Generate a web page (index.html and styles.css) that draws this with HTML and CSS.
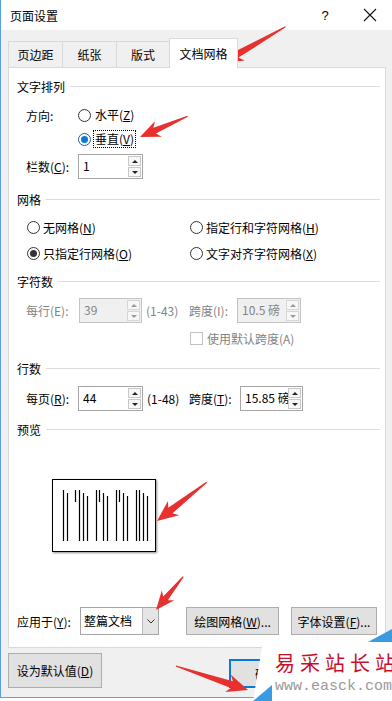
FILE: index.html
```html
<!DOCTYPE html>
<html lang="zh-CN">
<head>
<meta charset="utf-8">
<title>页面设置</title>
<link rel="stylesheet" href="styles.css">
</head>
<body>
<div class="win">
  <div class="titlebar">
    <span class="title">页面设置</span>
    <span class="help">?</span>
    <span class="close"><svg width="14" height="14" viewBox="0 0 14 14"><path d="M1 1 L13 13 M13 1 L1 13" stroke="#111" stroke-width="1.1" fill="none"/></svg></span>
  </div>
  <div class="client">
    <div class="tabs">
      <div class="tab t1">页边距</div>
      <div class="tab t2">纸张</div>
      <div class="tab t3">版式</div>
      <div class="tab t4 active">文档网格</div>
    </div>
    <div class="panel">
      <div class="group mt9">文字排列</div>
      <div class="row h24 mt8 ind9">
        <span class="lbl w52">方向:</span>
        <span class="radio"></span>
        <span class="rlab">水平(<u>Z</u>)</span>
      </div>
      <div class="row h24 ind9">
        <span class="lbl w52"></span>
        <span class="radio on focus"></span>
        <span class="rlab ring">垂直(<u>V</u>)</span>
      </div>
      <div class="row h25 mt3 ind9">
        <span class="lbl w52">栏数(<u>C</u>):</span>
        <div class="spin sw65"><span class="val">1</span><span class="arrows"><span class="up"></span><span class="dn"></span></span></div>
      </div>

      <div class="group mt11">网格</div>
      <div class="grid mt6">
        <div class="opt"><span class="radio"></span><span>无网格(<u>N</u>)</span></div>
        <div class="opt"><span class="radio"></span><span>指定行和字符网格(<u>H</u>)</span></div>
        <div class="opt"><span class="radio on"></span><span>只指定行网格(<u>O</u>)</span></div>
        <div class="opt"><span class="radio"></span><span>文字对齐字符网格(<u>X</u>)</span></div>
      </div>

      <div class="group mt6">字符数</div>
      <div class="row h25 mt8 ind9 dis">
        <span class="lbl w53">每行(E):</span>
        <div class="spin sw63 disabled"><span class="val">39</span><span class="arrows"><span class="up"></span><span class="dn"></span></span></div>
        <span class="range w43">(1-43)</span>
        <span class="lbl w48">跨度(I):</span>
        <div class="spin sw64 disabled"><span class="val">10.5 磅</span><span class="arrows"><span class="up"></span><span class="dn"></span></span></div>
      </div>
      <div class="row h20 mt5 chkrow dis">
        <span class="check"></span><span>使用默认跨度(A)</span>
      </div>

      <div class="group mt11">行数</div>
      <div class="row h25 mt9 ind9">
        <span class="lbl w52">每页(<u>R</u>):</span>
        <div class="spin sw65"><span class="val">44</span><span class="arrows"><span class="up"></span><span class="dn"></span></span></div>
        <span class="range w42">(1-48)</span>
        <span class="lbl w51">跨度(<u>T</u>):</span>
        <div class="spin sw63"><span class="val">15.85 磅</span><span class="arrows"><span class="up"></span><span class="dn"></span></span></div>
      </div>

      <div class="group mt9">预览</div>
      <div class="preview">
        <svg width="102" height="71" viewBox="0 0 102 71">
          <g stroke="#000" stroke-width="1.2">
            <line x1="10.5" y1="10" x2="10.5" y2="61"/>
            <line x1="14.5" y1="13" x2="14.5" y2="61"/>
            <line x1="22.5" y1="10" x2="22.5" y2="22"/>
            <line x1="26.5" y1="10" x2="26.5" y2="61"/>
            <line x1="30.5" y1="13" x2="30.5" y2="61"/>
            <line x1="34.5" y1="16" x2="34.5" y2="61"/>
            <line x1="43.5" y1="10" x2="43.5" y2="61"/>
            <line x1="46.5" y1="10" x2="46.5" y2="22"/>
            <line x1="50.5" y1="13" x2="50.5" y2="61"/>
            <line x1="54.5" y1="16" x2="54.5" y2="61"/>
            <line x1="63.5" y1="10" x2="63.5" y2="61"/>
            <line x1="66.5" y1="10" x2="66.5" y2="22"/>
            <line x1="70.5" y1="13" x2="70.5" y2="61"/>
            <line x1="74.5" y1="16" x2="74.5" y2="61"/>
            <line x1="83.5" y1="10" x2="83.5" y2="61"/>
            <line x1="86.5" y1="10" x2="86.5" y2="61"/>
            <line x1="90.5" y1="13" x2="90.5" y2="61"/>
            <line x1="94.5" y1="16" x2="94.5" y2="61"/>
          </g>
        </svg>
      </div>

      <div class="row h28 mt55">
        <span class="lbl w63">应用于(<u>Y</u>):</span>
        <div class="select"><span class="sval">整篇文档</span><span class="sbtn"><svg width="8" height="5" viewBox="0 0 8 5"><path d="M0.5 0.5 L4 4 L7.5 0.5" stroke="#333" stroke-width="1" fill="none"/></svg></span></div>
        <button class="btn b1">绘图网格(<u>W</u>)...</button>
        <button class="btn b2">字体设置(<u>F</u>)...</button>
      </div>
    </div>
    <div class="bottom">
      <button class="btn bdef">设为默认值(<u>D</u>)</button>
      <button class="btn bok">确定</button>
    </div>
  </div>
</div>

<svg class="arrows-overlay" width="392" height="701" viewBox="0 0 392 701">
  <g fill="#e8302e">
    <polygon transform="translate(222,63) rotate(-29.7)" points="0,0 21,-9 17,-3.5 73,-0.6 73,0.6 17,3.5 21,9"/>
    <polygon transform="translate(140,137) rotate(-23.6)" points="0,0 20,-8.5 16,-3.2 52,-0.6 52,0.6 16,3.2 20,8.5"/>
    <polygon transform="translate(157,521) rotate(-38)" points="0,0 21,-9 17,-3.5 63,-0.6 63,0.6 17,3.5 21,9"/>
    <polygon transform="translate(156,610) rotate(-50.7)" points="0,0 19,-8 15,-3 43,-0.6 43,0.6 15,3 19,8"/>
    <polygon transform="translate(248,690) rotate(-161.6)" points="0,0 21,-9 17,-3.5 76,-0.6 76,0.6 17,3.5 21,9"/>
  </g>
</svg>

<div class="wm">
  <svg class="wm-bg" width="142" height="75" viewBox="0 0 142 75">
    <polygon points="13,16 142,16 142,75 3,75" fill="#fff"/>
    <polygon points="118,16 142,3 142,16" fill="#3a9be0"/>
    <polygon points="3,75 22,59 22,75" fill="#3a9be0"/>
  </svg>
  <div class="wm-t1">易采站长站</div>
  <div class="wm-t2">www.easck.com</div>
</div>
</body>
</html>
```

FILE: styles.css
```css
* { box-sizing: border-box; }
html, body { margin: 0; padding: 0; }
body {
  width: 392px;
  height: 701px;
  overflow: hidden;
  position: relative;
  background: #fff;
  font-family: "Noto Sans CJK SC", "Noto Sans", sans-serif;
  font-size: 12px;
  color: #000;
}
u { text-decoration: underline; text-underline-offset: 1px; }

.win {
  height: 698px;
  border-left: 1px solid #5b9fe3;
  border-bottom: 1px solid #5b9fe3;
  background: #f0f0f0;
  display: flex;
  flex-direction: column;
}
.titlebar {
  height: 30px;
  flex: none;
  background: #fff;
  display: flex;
  align-items: center;
  padding-left: 9px;
}
.title { flex: 1; font-size: 12px; }
.help {
  width: 14px;
  text-align: center;
  margin-right: 31px;
  font-family: "Liberation Sans", sans-serif;
  font-size: 13px;
}
.close { width: 14px; height: 14px; margin-right: 15px; display: flex; }

.client { flex: 1; padding: 8px 0 0 7px; display: flex; flex-direction: column; }
.tabs { display: flex; align-items: flex-end; height: 29px; flex: none; }
.tab {
  height: 26px;
  border: 1px solid #d9d9d9;
  border-bottom: none;
  margin-right: -1px;
  display: flex;
  align-items: center;
  justify-content: center;
  background: #f0f0f0;
}
.t1 { width: 55px; }
.t2 { width: 55px; }
.t3 { width: 54px; }
.t4 { width: 69px; }
.tab.active {
  height: 30px;
  margin-bottom: -1px;
  background: #fff;
  position: relative;
  z-index: 1;
  padding-bottom: 1px;
}
.panel {
  width: 378px;
  height: 581px;
  flex: none;
  border: 1px solid #d9d9d9;
  background: #fff;
  padding: 0 5px 0 8px;
  display: flex;
  flex-direction: column;
}

.group {
  height: 18px;
  flex: none;
  display: flex;
  align-items: center;
  gap: 5px;
}
.group::after { content: ""; flex: 1; border-top: 1px solid #dcdcdc; }

.row { display: flex; align-items: center; flex: none; }
.h20 { height: 20px; }
.h24 { height: 24px; }
.h25 { height: 25px; }
.h28 { height: 28px; }
.mt3 { margin-top: 3px; }
.mt5 { margin-top: 5px; }
.mt6 { margin-top: 6px; }
.mt8 { margin-top: 8px; }
.mt9 { margin-top: 9px; }
.mt11 { margin-top: 11px; }
.mt55 { margin-top: 55px; }
.ind9 { padding-left: 9px; }

.lbl { flex: none; white-space: nowrap; }
.w42 { width: 42px; }
.w43 { width: 43px; }
.w48 { width: 48px; }
.w51 { width: 51px; }
.w52 { width: 52px; }
.w53 { width: 53px; }
.w63 { width: 63px; }

.dis { color: #838383; }

.radio {
  width: 13px;
  height: 13px;
  flex: none;
  border: 1px solid #333;
  border-radius: 50%;
  background: #fff;
  display: inline-flex;
  align-items: center;
  justify-content: center;
}
.radio.on::after {
  content: "";
  width: 7px;
  height: 7px;
  border-radius: 50%;
  background: #333;
}
.radio.focus { border-color: #1f5fa8; }
.radio.focus::after { background: #0a78d7; }
.rlab {
  margin-left: 2px;
  padding: 0 1px;
  border: 1px dotted transparent;
  line-height: 16px;
}
.rlab.ring { border-color: #000; }

.grid {
  display: grid;
  grid-template-columns: 163px auto;
  grid-auto-rows: 26px;
  margin-left: 10px;
  flex: none;
}
.opt { display: flex; align-items: center; gap: 3px; white-space: nowrap; }

.spin {
  display: flex;
  height: 25px;
  flex: none;
  border: 1px solid #a6a6a6;
  background: #fff;
}
.sw63 { width: 63px; }
.sw64 { width: 64px; }
.sw65 { width: 65px; }
.spin .val {
  flex: 1;
  min-width: 0;
  padding-left: 4px;
  line-height: 21px;
  overflow: hidden;
  white-space: nowrap;
}
.spin .arrows {
  width: 14px;
  flex: none;
  display: flex;
  flex-direction: column;
  padding: 1px 1px 1px 0;
  gap: 1px;
}
.spin .arrows span {
  flex: 1;
  border: 1px solid #c8c8c8;
  background: #f7f7f7;
  display: flex;
  align-items: center;
  justify-content: center;
}
.up::before, .dn::before {
  content: "";
  border-left: 3px solid transparent;
  border-right: 3px solid transparent;
}
.up::before { border-bottom: 3px solid #222; }
.dn::before { border-top: 3px solid #222; }
.spin.disabled { background: #f0f0f0; border-color: #c4c4c4; }
.spin.disabled .arrows span { background: #f7f7f7; border-color: #d6d6d6; }
.spin.disabled .up::before { border-bottom-color: #9a9a9a; }
.spin.disabled .dn::before { border-top-color: #9a9a9a; }

.range { margin-left: 4px; flex: none; white-space: nowrap; }

.chkrow { padding-left: 173px; gap: 4px; }
.check {
  width: 13px;
  height: 13px;
  border: 1px solid #c2c2c2;
  background: #fff;
  flex: none;
}

.preview {
  margin: 41px 0 0 35px;
  width: 104px;
  height: 73px;
  flex: none;
  border: 1px solid #000;
  background: #fff;
  box-shadow: 1px 1px 2px rgba(0, 0, 0, 0.45);
}
.preview svg { display: block; }

.select {
  width: 79px;
  height: 28px;
  flex: none;
  display: flex;
  border: 1px solid #a6a6a6;
  background: #fff;
}
.sval { flex: 1; padding-left: 3px; line-height: 26px; white-space: nowrap; }
.sbtn {
  width: 16px;
  background: #e5e5e5;
  border-left: 1px solid #bdbdbd;
  display: flex;
  align-items: center;
  justify-content: center;
}

.btn {
  font-family: inherit;
  font-size: 12px;
  color: #000;
  background: #e1e1e1;
  border: 1px solid #adadad;
  padding: 0;
  margin: 0;
  flex: none;
  white-space: nowrap;
}
.b1 { width: 93px; height: 28px; margin-left: 27px; }
.b2 { width: 86px; height: 28px; margin-left: 12px; }

.bottom { display: flex; align-items: flex-end; height: 35px; margin-top: 5px; flex: none; }
.bdef { width: 94px; height: 35px; }
.bok { width: 76px; height: 29px; margin-left: 127px; border: 2px solid #0a78d7; }

.arrows-overlay { position: absolute; left: 0; top: 0; pointer-events: none; }

.wm {
  position: absolute;
  left: 250px;
  top: 626px;
  width: 142px;
  height: 75px;
  padding-left: 25px;
  overflow: hidden;
}
.wm-bg { position: absolute; left: 0; top: 0; }
.wm-t1 {
  position: relative;
  margin-top: 26px;
  height: 21px;
  line-height: 21px;
  font-size: 20px;
  letter-spacing: 5px;
  color: #c8102e;
  white-space: nowrap;
}
.wm-t2 {
  position: relative;
  margin-top: 6px;
  height: 16px;
  line-height: 16px;
  font-family: "Liberation Mono", monospace;
  font-size: 15px;
  color: #9a9a9a;
  white-space: nowrap;
}
```
